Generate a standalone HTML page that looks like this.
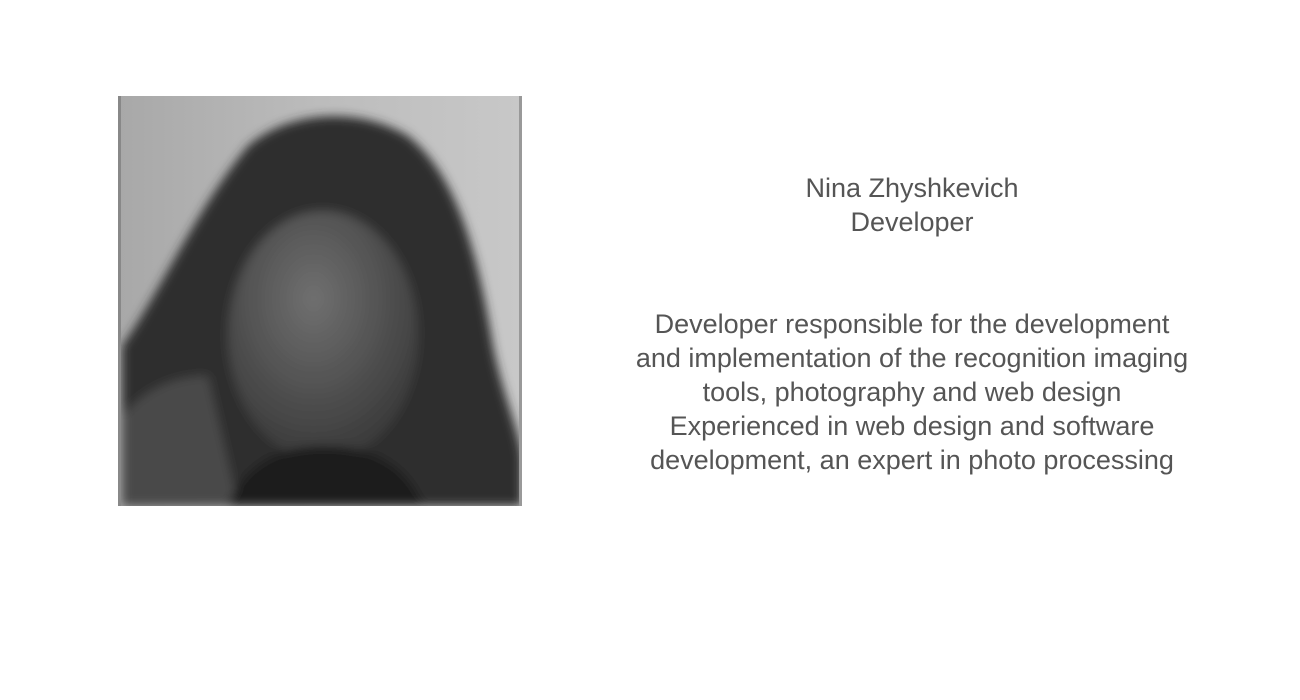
<!DOCTYPE html>
<html><head><meta charset="utf-8"><style>
html,body{margin:0;padding:0;background:#fff;width:1300px;height:700px;overflow:hidden}
.photo{position:absolute;left:118px;top:96px;width:404px;height:410px}
.t{position:absolute;left:562px;width:700px;text-align:center;font-family:"Liberation Sans",sans-serif;font-size:27px;line-height:34px;color:#555;font-weight:normal}
</style></head><body>
<svg class="photo" viewBox="0 0 404 410" width="404" height="410">
<defs>
<linearGradient id="bg" x1="0" x2="1"><stop offset="0" stop-color="#a8a8a8"/><stop offset="0.5" stop-color="#bcbcbc"/><stop offset="1" stop-color="#c8c8c8"/></linearGradient>
<radialGradient id="face" cx="0.45" cy="0.35" r="0.65"><stop offset="0" stop-color="#707070"/><stop offset="1" stop-color="#3a3a3a"/></radialGradient>
<filter id="b"><feGaussianBlur stdDeviation="5"/></filter>
</defs>
<rect width="404" height="410" fill="url(#bg)"/>
<g filter="url(#b)">
<path d="M4 410 L4 250 C40 200 80 110 130 50 C170 15 240 10 290 40 C340 80 360 160 375 250 C385 300 400 330 404 360 L404 410 Z" fill="#2e2e2e"/>
<path d="M4 320 C30 290 60 280 90 280 L120 410 L4 410 Z" fill="#4a4a4a"/>
<ellipse cx="205" cy="240" rx="95" ry="125" fill="url(#face)"/>
<path d="M110 410 C125 370 160 350 205 350 C255 350 290 370 305 410 Z" fill="#1a1a1a"/>
</g>
<rect x="0" y="0" width="3" height="410" fill="#888"/>
<rect x="401" y="0" width="3" height="410" fill="#999"/>
</svg>
<div class="t" style="top:171px">Nina Zhyshkevich<br>Developer</div>
<div class="t" style="top:307px">Developer responsible for the development<br>and implementation of the recognition imaging<br>tools, photography and web design<br>Experienced in web design and software<br>development, an expert in photo processing</div>
</body></html>
